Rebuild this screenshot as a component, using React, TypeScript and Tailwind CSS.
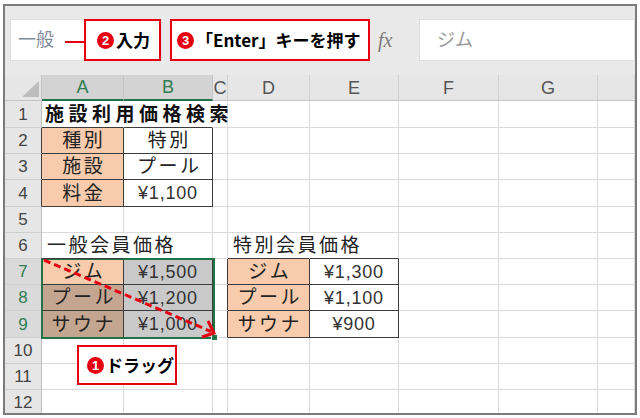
import React from 'react';

type Kind = 'jp' | 'num' | 'title' | 'left';
type Cell = { t: string; kind: Kind; bg?: string };

const ORANGE = 'bg-[#f8cbad]';
const BROWN = 'bg-[#c4a690]';
const GRAY = 'bg-[#c9c9c9]';

const data: Record<string, Cell> = {
  '1-0': { t: '施設利用価格検索', kind: 'title' },
  '2-0': { t: '種別', kind: 'jp', bg: ORANGE },
  '2-1': { t: '特別', kind: 'jp' },
  '3-0': { t: '施設', kind: 'jp', bg: ORANGE },
  '3-1': { t: 'プール', kind: 'jp' },
  '4-0': { t: '料金', kind: 'jp', bg: ORANGE },
  '4-1': { t: '¥1,100', kind: 'num' },
  '6-0': { t: '一般会員価格', kind: 'left' },
  '6-3': { t: '特別会員価格', kind: 'left' },
  '7-0': { t: 'ジム', kind: 'jp', bg: ORANGE },
  '7-1': { t: '¥1,500', kind: 'num', bg: GRAY },
  '7-3': { t: 'ジム', kind: 'jp', bg: ORANGE },
  '7-4': { t: '¥1,300', kind: 'num' },
  '8-0': { t: 'プール', kind: 'jp', bg: BROWN },
  '8-1': { t: '¥1,200', kind: 'num', bg: GRAY },
  '8-3': { t: 'プール', kind: 'jp', bg: ORANGE },
  '8-4': { t: '¥1,100', kind: 'num' },
  '9-0': { t: 'サウナ', kind: 'jp', bg: BROWN },
  '9-1': { t: '¥1,000', kind: 'num', bg: GRAY },
  '9-3': { t: 'サウナ', kind: 'jp', bg: ORANGE },
  '9-4': { t: '¥900', kind: 'num' },
};

const rowH = [
  'h-[27px]', 'h-[26px]', 'h-[26px]', 'h-[27px]', 'h-[26px]', 'h-[26px]',
  'h-[26px]', 'h-[26px]', 'h-[27px]', 'h-[26px]', 'h-[26px]', 'h-[26px]',
];

const inTable = (r: number, c: number) =>
  (r >= 2 && r <= 4 && (c === 0 || c === 1)) ||
  (r >= 7 && r <= 9 && (c === 0 || c === 1)) ||
  (r >= 7 && r <= 9 && (c === 3 || c === 4));

const kindCls: Record<Kind, string> = {
  jp: 'justify-center pl-[2.5px] text-[19px] tracking-[2.5px] text-[#222]',
  num: 'justify-center text-[18px] tracking-[0.8px] text-[#333]',
  title: 'z-10 justify-start whitespace-nowrap pl-[3px] text-[19px] font-bold tracking-[4.5px] text-[#111]',
  left: 'z-10 justify-start whitespace-nowrap pl-[5px] text-[19px] tracking-[2.5px] text-[#222]',
};

const GRID_COLS = 'grid grid-cols-[37px_82px_89px_15px_82px_89px_100px_99px_1fr] grid-rows-[100%]';

function Circ({ n }: { n: string }) {
  return (
    <span className="inline-flex h-[17px] w-[17px] shrink-0 items-center justify-center rounded-full bg-[#e60012] font-['Liberation_Sans',sans-serif] text-[13px] font-bold leading-none text-white">
      {n}
    </span>
  );
}

const headers = ['A', 'B', 'C', 'D', 'E', 'F', 'G', ''];

export default function App() {
  return (
    <div className="relative h-[418px] w-[640px] overflow-hidden bg-white font-['Liberation_Sans','Noto_Sans_CJK_JP',sans-serif]">
      <div className="ml-[3px] mt-[4px] flex h-[411px] w-[634px] flex-col overflow-hidden border-2 border-[#7b7b7b] bg-white">
        {/* formula bar */}
        <div className="flex h-[69px] shrink-0 items-start bg-[#e9e9e9] pl-[5px] pt-[13px]">
          <div className="flex h-[42px] w-[152px] items-center border border-[#dedede] bg-white pl-[7px] text-[18px] text-[#7d8a97]">
            一般
          </div>
          <div className="ml-[8px] flex h-[42px] w-[200px] items-center gap-[2px] border-2 border-[#e60012] bg-white pl-[5px] font-['Noto_Sans_CJK_JP',sans-serif] text-[17px] font-bold text-black">
            <Circ n="3" />
            <span>「Enter」キーを押す</span>
          </div>
          <div className="flex h-[42px] w-[49px] items-center pl-[8px] font-['Liberation_Serif',serif] text-[20px] italic text-[#7a7a7a]">
            fx
          </div>
          <div className="flex h-[42px] flex-1 items-center border border-[#dedede] bg-white pl-[17px] text-[18px] text-[#9a9a9a]">
            ジム
          </div>
        </div>

        {/* column headers */}
        <div className={`${GRID_COLS} h-[26px] shrink-0 bg-[#e6e6e6]`}>
          <div className="relative border-b border-r border-b-[#c4c4c4] border-r-[#c4c4c4]">
            <svg className="absolute left-0 top-0" width="37" height="26">
              <polygon points="34,6 34,22 17,22" fill="#bdbdbd" />
            </svg>
          </div>
          {headers.map((h, i) => {
            const sel = i === 0 || i === 1;
            return (
              <div
                key={i}
                className={
                  sel
                    ? 'flex items-center justify-center border-b-2 border-r border-b-[#217346] border-r-[#c4c4c4] bg-[#d3d3d3] text-[18px] leading-none text-[#2f7d52]'
                    : 'flex items-center justify-center overflow-hidden border-b border-r border-b-[#c4c4c4] border-r-[#d0d0d0] text-[18px] leading-none text-[#555]'
                }
              >
                {h}
              </div>
            );
          })}
        </div>

        {/* rows */}
        {rowH.map((hc, ri) => {
          const r = ri + 1;
          const selRow = r >= 7 && r <= 9;
          return (
            <div key={r} className={`${GRID_COLS} ${hc} shrink-0`}>
              <div
                className={`flex items-center justify-center border-b border-r border-b-[#cfcfcf] text-[17px] leading-none ${
                  inTable(r, 0) ? 'border-r-[#3c3c3c]' : 'border-r-[#bfbfbf]'
                } ${selRow ? 'bg-[#dadada] text-[#2f7d52]' : 'bg-[#e6e6e6] text-[#444]'}`}
              >
                {r}
              </div>
              {headers.map((_, c) => {
                const cell = data[`${r}-${c}`];
                const hideR = (r === 1 && (c === 0 || c === 1)) || (r === 6 && (c === 0 || c === 3));
                const darkR = inTable(r, c) || inTable(r, c + 1);
                const darkB = inTable(r, c) || inTable(r + 1, c);
                const rCls = hideR ? 'border-r-transparent' : darkR ? 'border-r-[#3c3c3c]' : 'border-r-[#dadada]';
                const bCls = darkB ? 'border-b-[#3c3c3c]' : 'border-b-[#dadada]';
                return (
                  <div
                    key={c}
                    className={`relative flex min-h-0 items-center border-b border-r leading-none ${rCls} ${bCls} ${cell?.bg ?? ''} ${
                      cell ? kindCls[cell.kind] : ''
                    }`}
                  >
                    {cell?.t}
                  </div>
                );
              })}
            </div>
          );
        })}
      </div>

      {/* selection */}
      <div className="pointer-events-none absolute left-[41px] top-[258px] h-[81px] w-[174px] border-2 border-[#217346]" />
      <div className="absolute left-[211px] top-[334px] h-[7px] w-[7px] border border-white bg-[#217346]" />

      {/* drag arrow */}
      <svg className="pointer-events-none absolute left-0 top-0" width="640" height="418">
        <line x1="44" y1="260" x2="211" y2="331.5" stroke="#e60012" strokeWidth="3" strokeDasharray="7 4" />
        <polyline points="208,321 214,333 202,337" fill="none" stroke="#e60012" strokeWidth="3" strokeLinejoin="miter" />
      </svg>

      {/* callout 2 */}
      <div className="absolute left-[65px] top-[41px] h-[2px] w-[20px] bg-[#e60012]" />
      <div className="absolute left-[84px] top-[19px] flex h-[42px] w-[77px] items-center gap-[2px] border-2 border-[#e60012] bg-white pl-[11px] font-['Noto_Sans_CJK_JP',sans-serif] text-[17px] font-bold text-black">
        <Circ n="2" />
        <span>入力</span>
      </div>

      {/* callout 1 */}
      <div className="absolute left-[77px] top-[345px] flex h-[40px] w-[100px] items-center gap-[2px] border-2 border-[#e60012] bg-white pl-[8px] font-['Noto_Sans_CJK_JP',sans-serif] text-[17px] font-bold text-black">
        <Circ n="1" />
        <span>ドラッグ</span>
      </div>
    </div>
  );
}
